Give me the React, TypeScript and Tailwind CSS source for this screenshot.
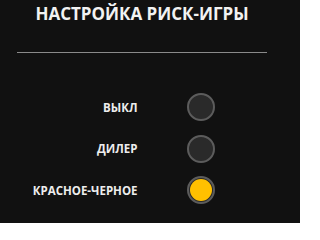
import React from "react";

const rows = [
  { label: "ВЫКЛ", on: false },
  { label: "ДИЛЕР", on: false },
  { label: "КРАСНОЕ-ЧЕРНОЕ", on: true },
];

export default function App() {
  return (
    <div className="w-[300px] h-[223px] bg-[#111111] font-['Open_Sans',sans-serif] overflow-hidden">
      <div className="w-[284px]">
        <h1 className="pt-[2px] text-center text-[17px] leading-[24px] font-bold text-[#f2f2f2]">
          НАСТРОЙКА РИСК-ИГРЫ
        </h1>
        <div className="mx-[17px] mt-[26px] h-px bg-[#8a8a8a]" />
        <div className="mt-[40px] flex flex-col gap-[13.5px]">
          {rows.map((r) => (
            <div key={r.label} className="flex items-center h-[28px]">
              <span className="w-[137.5px] text-right text-[11.5px] leading-[16px] pt-px font-bold text-[#ededed]">
                {r.label}
              </span>
              <div className="ml-[49px] w-[28px] h-[28px] rounded-full border-2 border-[#5c5c5c] bg-[#2a2a2a] p-px">
                {r.on && <div className="w-full h-full rounded-full bg-[#ffc000]" />}
              </div>
            </div>
          ))}
        </div>
      </div>
    </div>
  );
}
